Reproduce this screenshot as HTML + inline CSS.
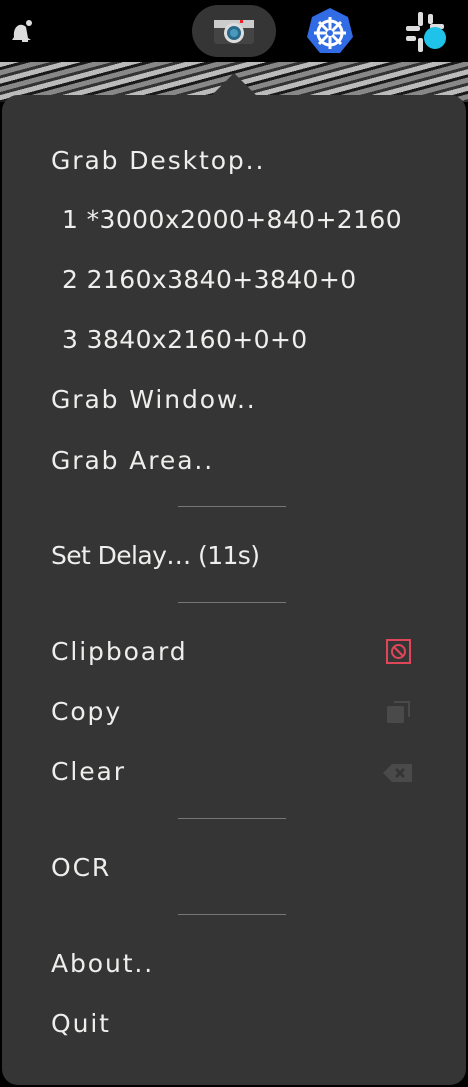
<!DOCTYPE html>
<html><head><style>
body{margin:0;width:468px;height:1087px;background:#000;position:relative;overflow:hidden;font-family:"DejaVu Sans","Liberation Sans",sans-serif;}
.strip{position:absolute;left:0;top:62px;width:468px;height:40px;background:repeating-linear-gradient(165deg,#bbb 0 5px,#1a1a1a 5px 8px,#888 8px 13px,#333 13px 16px);}
.menu{position:absolute;left:2px;top:95px;width:464px;height:990px;background:#353535;border-radius:16px;}
.arrow{position:absolute;left:211px;top:73px;width:0;height:0;border-left:23px solid transparent;border-right:23px solid transparent;border-bottom:23px solid #353535;}
.it{position:absolute;left:51px;color:#eeeeec;font-size:25px;line-height:30px;letter-spacing:1.9px;white-space:nowrap;}
.n{letter-spacing:0.4px;}
.sep{position:absolute;left:178px;width:108px;height:1px;background:#777;}
</style></head><body>
<div class="strip"></div>
<svg style="position:absolute;left:8px;top:18px" width="24" height="26" viewBox="0 0 24 26"><path d="M4 22 L6 19 Q5 10 11 7 Q15 6 18 9 L20 20 L23 22 Z" fill="#ddd"/><circle cx="21" cy="5" r="3" fill="#ddd"/><rect x="14" y="22" width="6" height="2" fill="#ddd"/></svg>
<div style="position:absolute;left:192px;top:5px;width:84px;height:52px;border-radius:26px;background:#353535"></div>
<svg style="position:absolute;left:213px;top:17px" width="42" height="28" viewBox="0 0 42 28"><rect x="1" y="3" width="40" height="24" rx="3" fill="#444"/><rect x="1" y="3" width="40" height="8" fill="#ccc"/><rect x="27" y="3" width="3" height="3" fill="#e22"/><circle cx="21" cy="16" r="10" fill="#ddd"/><circle cx="21" cy="16" r="7" fill="#2a6a8a"/><circle cx="21" cy="16" r="4" fill="#4a9ac0"/></svg>
<svg style="position:absolute;left:306px;top:7px" width="48" height="48" viewBox="0 0 48 48"><polygon points="24,1 42,10 47,30 34,46 14,46 1,30 6,10" fill="#326ce5"/><circle cx="24" cy="26" r="12" fill="none" stroke="#fff" stroke-width="3"/><g stroke="#fff" stroke-width="3"><line x1="24" y1="10" x2="24" y2="42"/><line x1="8" y1="26" x2="40" y2="26"/><line x1="13" y1="15" x2="35" y2="37"/><line x1="35" y1="15" x2="13" y2="37"/></g><circle cx="24" cy="26" r="3" fill="#326ce5"/></svg>
<svg style="position:absolute;left:404px;top:10px" width="44" height="44" viewBox="0 0 44 44"><g fill="#ddd"><rect x="14" y="2" width="5" height="14" rx="2"/><rect x="2" y="16" width="14" height="5" rx="2"/><rect x="26" y="14" width="14" height="5" rx="2"/><rect x="14" y="28" width="5" height="14" rx="2"/><rect x="2" y="26" width="10" height="5" rx="2"/><rect x="24" y="4" width="5" height="10" rx="2"/></g><circle cx="31" cy="28" r="11" fill="#1fc3ea"/></svg>
<div class="arrow"></div>
<div class="menu"></div>
<div class="it" style="top:146px">Grab Desktop..</div>
<div class="it n" style="top:205px;left:62px">1 *3000x2000+840+2160</div>
<div class="it n" style="top:265px;left:62px">2 2160x3840+3840+0</div>
<div class="it n" style="top:325px;left:62px">3 3840x2160+0+0</div>
<div class="it" style="top:385px">Grab Window..</div>
<div class="it" style="top:446px">Grab Area..</div>
<div class="sep" style="top:506px"></div>
<div class="it" style="top:541px;letter-spacing:-0.6px">Set Delay… (11s)</div>
<div class="sep" style="top:602px"></div>
<div class="it" style="top:637px">Clipboard</div>
<div class="it" style="top:697px">Copy</div>
<div class="it" style="top:757px">Clear</div>
<div class="sep" style="top:818px"></div>
<div class="it" style="top:853px">OCR</div>
<div class="sep" style="top:914px"></div>
<div class="it" style="top:949px">About..</div>
<div class="it" style="top:1009px">Quit</div>
<svg style="position:absolute;left:386px;top:639px" width="25" height="25" viewBox="0 0 25 25"><rect x="1" y="1" width="23" height="23" fill="none" stroke="#e0465a" stroke-width="2"/><circle cx="12.5" cy="12.5" r="6.5" fill="none" stroke="#e0465a" stroke-width="2"/><line x1="8" y1="8" x2="17" y2="17" stroke="#e0465a" stroke-width="2"/></svg>
<svg style="position:absolute;left:386px;top:699px" width="25" height="25" viewBox="0 0 25 25"><path d="M8 2 H24 V18 H22 V4 H8 Z" fill="#4a4a4a"/><rect x="1" y="7" width="17" height="17" rx="2" fill="#4a4a4a"/></svg>
<svg style="position:absolute;left:383px;top:762px" width="30" height="22" viewBox="0 0 30 22"><path d="M0 11 L9 2 H29 V20 H9 Z" fill="#4a4a4a"/><path d="M13 7 L21 15 M21 7 L13 15" stroke="#353535" stroke-width="3"/></svg>
</body></html>
